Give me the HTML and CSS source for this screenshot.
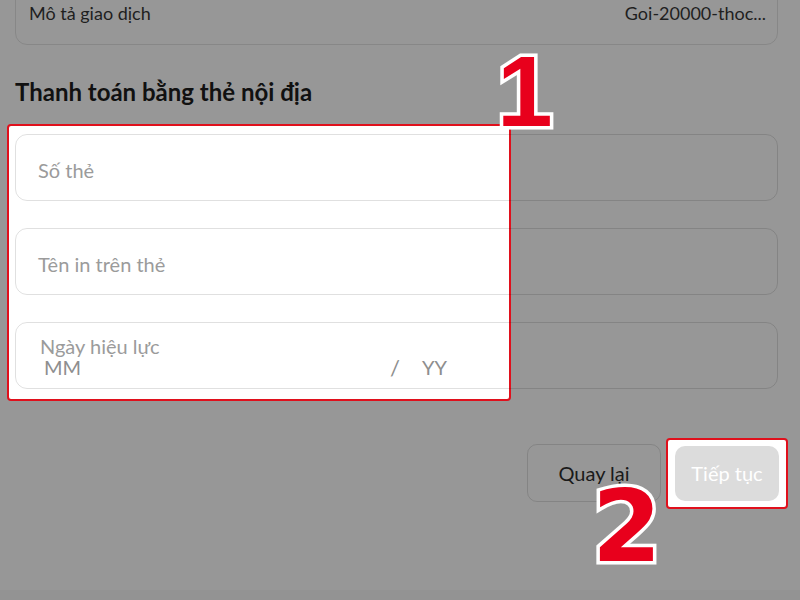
FILE: index.html
```html
<!DOCTYPE html>
<html lang="vi">
<head>
<meta charset="utf-8">
<title>Thanh toán</title>
<link rel="stylesheet" href="styles.css">
</head>
<body>
<div class="page">
  <div class="summary">
    <span class="summary-label">Mô tả giao dịch</span>
    <span class="summary-value">Goi-20000-thoc...</span>
  </div>

  <h2 class="title">Thanh toán bằng thẻ nội địa</h2>

  <div class="form">
    <div class="spot spot-form"></div>
    <div class="field"><span class="ph">Số thẻ</span></div>
    <div class="field"><span class="ph">Tên in trên thẻ</span></div>
    <div class="field field-date">
      <span class="ph date-label">Ngày hiệu lực</span>
      <div class="date-row">
        <span class="ph mm">MM</span>
        <span class="ph slash">/</span>
        <span class="ph yy">YY</span>
      </div>
    </div>
  </div>

  <div class="actions">
    <button class="btn btn-back">Quay lại</button>
    <div class="next-wrap">
      <div class="spot spot-btn"></div>
      <button class="btn btn-next">Tiếp tục</button>
    </div>
  </div>

  <span class="step step-1">1</span>
  <span class="step step-2">2</span>
</div>
<div class="footer"></div>
</body>
</html>
```

FILE: styles.css
```css
* { box-sizing: border-box; }
html, body { margin: 0; padding: 0; }
body {
  background: #979797;
  font-family: Lato, "Noto Sans", sans-serif;
  width: 800px;
  height: 600px;
  overflow: hidden;
}
.page {
  position: relative;
  display: flow-root;
  height: 590px;
  padding: 0 22px 0 15px;
}
.footer {
  height: 10px;
  background: #939393;
}
.summary {
  margin-top: -30px;
  height: 75px;
  border: 1px solid rgba(0,0,0,0.1);
  border-radius: 12px;
  display: flex;
  justify-content: space-between;
  padding: 30px 11px 0 13px;
  font-size: 18px;
  line-height: 24px;
  color: #1f1f1f;
}
.title {
  margin: 33px 0 0;
  font-size: 24px;
  line-height: 28px;
  font-weight: 700;
  color: #111;
}
.form {
  position: relative;
  margin-top: 28px;
  display: flex;
  flex-direction: column;
  gap: 27px;
}
.spot {
  position: absolute;
  background: #fff;
  border: 2px solid #e0101c;
  border-radius: 4px;
  z-index: 0;
}
.spot-form {
  left: -8px;
  top: -10px;
  width: 504px;
  height: 277px;
}
.field {
  position: relative;
  z-index: 1;
  height: 67px;
  border: 1px solid rgba(0,0,0,0.12);
  border-radius: 12px;
  display: flex;
  align-items: center;
  padding: 5px 22px 0;
}
.ph {
  font-size: 20px;
  color: #9b9b9b;
}
.field-date {
  flex-direction: column;
  align-items: flex-start;
  justify-content: center;
  padding: 2px 0 0 24px;
}
.date-label { line-height: 21px; }
.date-row {
  display: flex;
  align-items: center;
  line-height: 21px;
}
.mm { width: 350px; padding-left: 4px; color: #8e8e8e; }
.slash { width: 32px; color: #8e8e8e; font-size: 22px; }
.yy { color: #8e8e8e; }
.actions {
  margin-top: 55px;
  display: flex;
  justify-content: flex-end;
  align-items: center;
  gap: 14px;
}
.btn {
  font-family: Lato, "Noto Sans", sans-serif;
  font-size: 20px;
  border-radius: 10px;
  cursor: pointer;
}
.btn-back {
  width: 134px;
  height: 58px;
  background: transparent;
  border: 1px solid rgba(0,0,0,0.12);
  color: #1a1a1a;
}
.next-wrap {
  position: relative;
  margin-right: -1px;
}
.spot-btn {
  left: -9px;
  top: -8px;
  right: -9px;
  bottom: -8px;
}
.btn-next {
  position: relative;
  z-index: 1;
  width: 104px;
  height: 55px;
  background: #dcdcdc;
  border: none;
  color: #fff;
}
.step {
  position: absolute;
  font-weight: 700;
  font-size: 100px;
  line-height: 1;
  color: #e8001c;
  -webkit-text-stroke: 7px #fff;
  paint-order: stroke fill;
  z-index: 2;
}
.step-1 {
  font-family: "Liberation Sans", Arial, sans-serif;
  left: 497px;
  top: 41px;
}
.step-2 {
  font-family: "DejaVu Sans", sans-serif;
  left: 592px;
  top: 477px;
}
```
